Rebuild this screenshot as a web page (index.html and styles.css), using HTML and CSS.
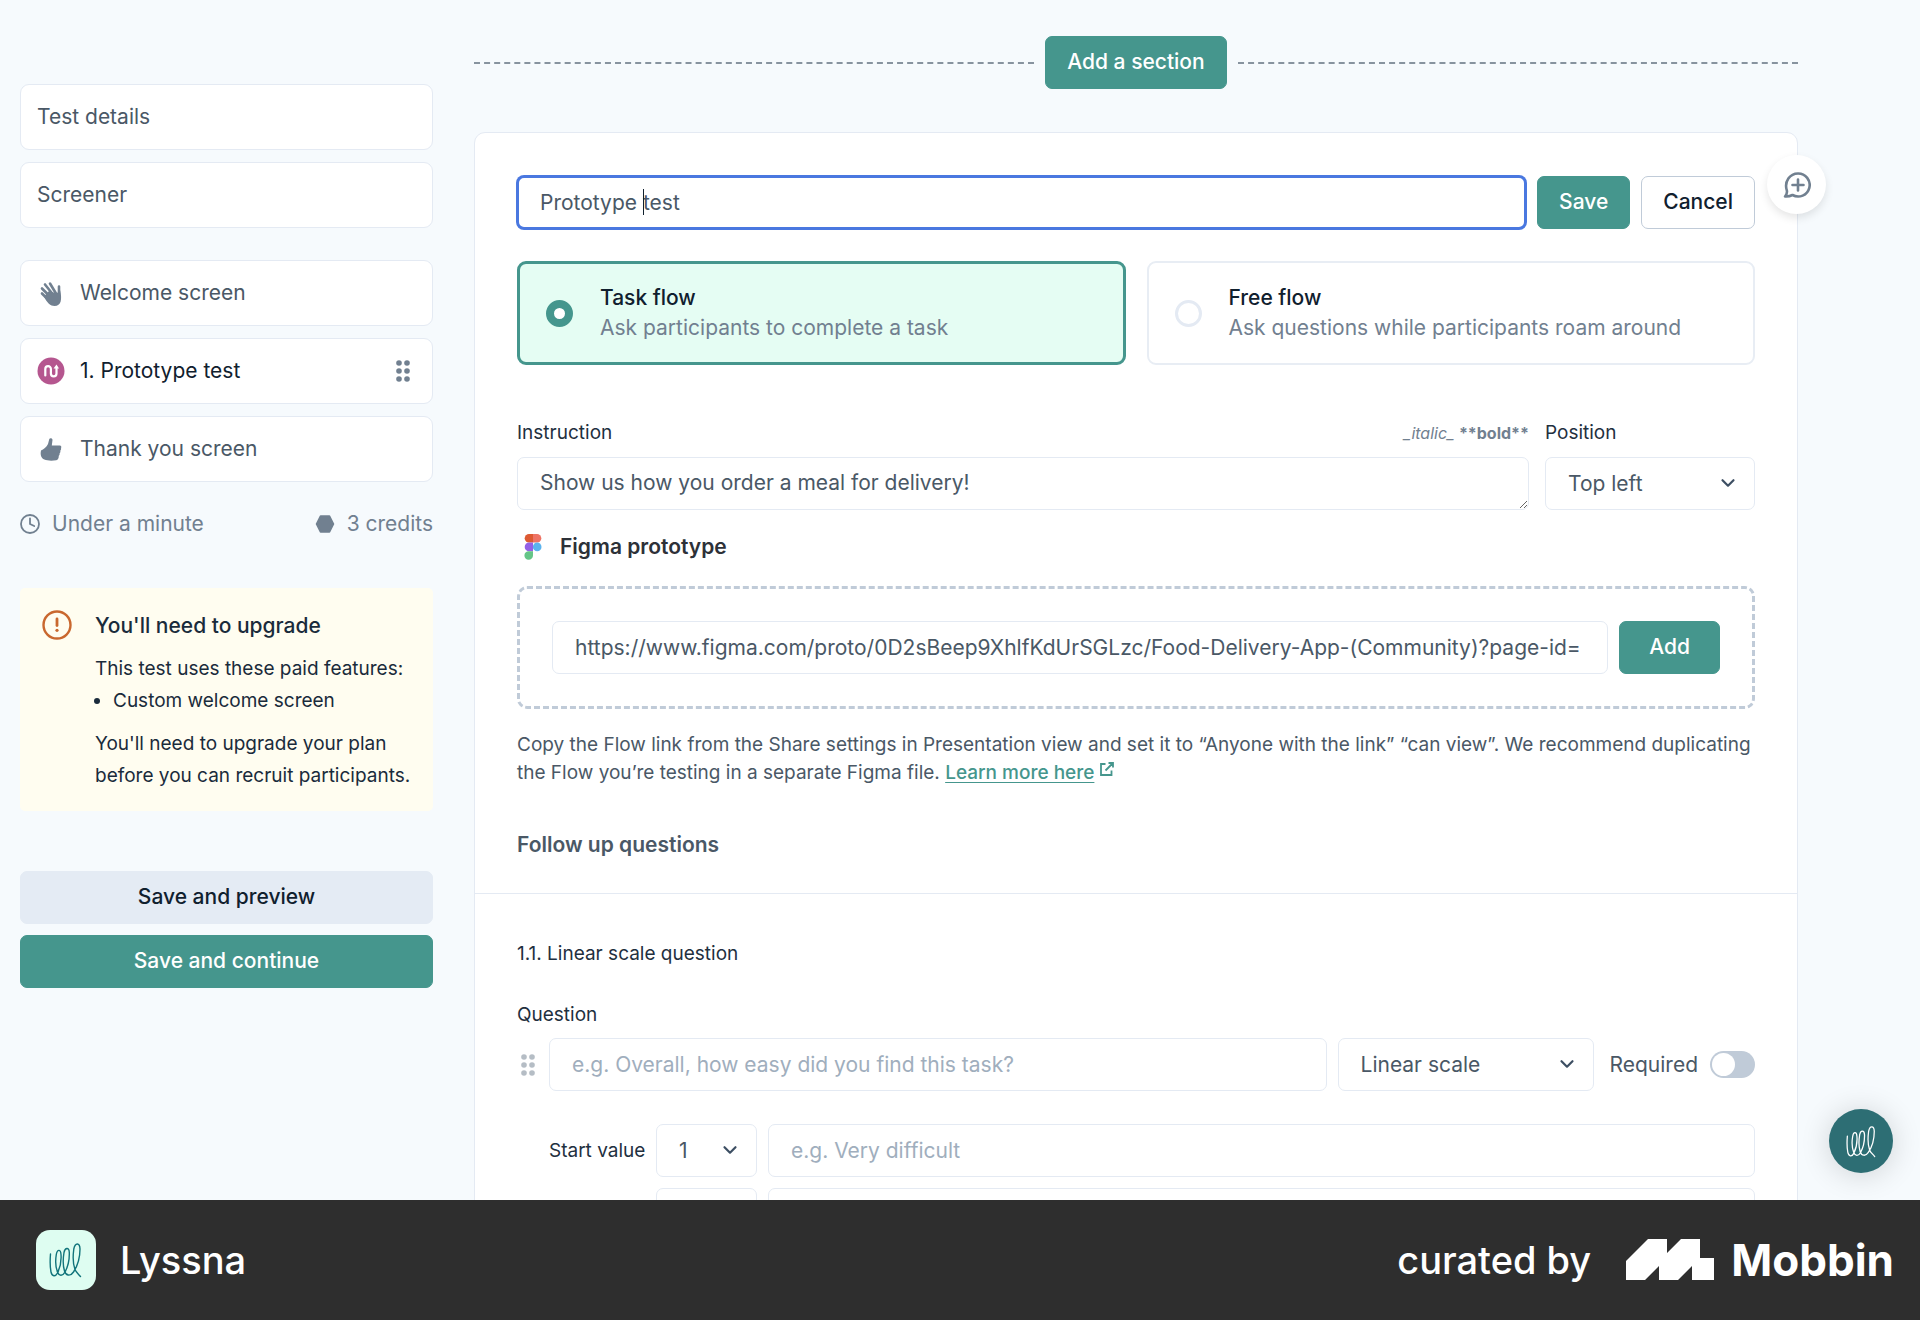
FILE: index.html
```
<!DOCTYPE html>
<html lang="en">
<head>
<meta charset="UTF-8">
<meta name="viewport" content="width=device-width, initial-scale=1">
<title>Prototype test</title>
<link rel="stylesheet" href="styles.css">
</head>
<body>
<div class="workspace">
<nav class="sidebar">
<div class="nav-group">
<a class="nav-item" href="#details">Test details</a>
<a class="nav-item" href="#screener">Screener</a>
</div>
<div class="nav-group">
<a class="nav-item" href="#welcome">
<svg class="nav-icon" viewBox="0 0 28 28" fill="none" stroke="#718090" stroke-width="2.600" stroke-linecap="round"><path d="M5 14.500l6 6M5 9.500l9 9M8 5.500l8 10M13 4.500l6 10M22 7.500v10"/><path d="M7 17.500L12 12l7.500 2.500 3.700-3c2 9 1 15.500-5.700 15.500-4 0-7.500-3-10.500-9.500z" fill="#718090" stroke="none"/></svg>
Welcome screen</a>
<a class="nav-item active" href="#prototype">
<svg class="nav-icon" viewBox="0 0 28 28"><circle cx="14" cy="14" r="13.500" fill="#b5568f"/><path d="M8.300 18.500V12a2.800 2.800 0 0 1 5.600 0v4.500a2.800 2.800 0 0 0 5.600 0v-6" fill="none" stroke="#fff" stroke-width="2.200" stroke-linecap="round"/><path d="M16.500 11.500l3-4 2.500 4z" fill="#fff"/></svg>
1. Prototype test
<svg class="drag" viewBox="0 0 16 24" fill="#718090"><circle cx="4" cy="4" r="2.800"/><circle cx="12" cy="4" r="2.800"/><circle cx="4" cy="12" r="2.800"/><circle cx="12" cy="12" r="2.800"/><circle cx="4" cy="20" r="2.800"/><circle cx="12" cy="20" r="2.800"/></svg>
</a>
<a class="nav-item" href="#thanks">
<svg class="nav-icon" viewBox="0 0 28 28" fill="#718090"><path d="M4 15.500c2.500-1 5.500-3.500 7-6.500l1.300-5c.5-1.500 3.300-1 3.200 1l-.7 5.500h8c1.500 0 2 1.500 1.200 2.500.3 1 0 2-.7 2.700.3 1 0 2-.7 2.600.2 1-.1 2-.8 2.500 0 2.500-.8 4-2.500 4.400-4 .8-9 .6-12-.6-3-1.300-4.300-4.600-3.300-9.100z"/></svg>
Thank you screen</a>
</div>
<div class="meta">
<span class="meta-item"><svg width="20" height="20" viewBox="0 0 20 20" fill="none" stroke="#718090" stroke-width="1.800"><circle cx="10" cy="10" r="9"/><path d="M10 4.500V10l4.200 2" stroke-linecap="round"/></svg>Under a minute</span>
<span class="meta-item"><svg width="20" height="20" viewBox="0 0 20 20"><path d="M5.500 2h9l4 8-4 8h-9l-4-8z" fill="#718090" stroke="#718090" stroke-width="1.600" stroke-linejoin="round"/></svg>3 credits</span>
</div>
<section class="notice">
<svg width="30" height="30" viewBox="0 0 30 30" fill="none" stroke="#c9682f" stroke-width="2.400"><circle cx="15" cy="15" r="13.500"/><path d="M15 9v6.500" stroke-width="2.800" stroke-linecap="round"/><circle cx="15" cy="20.300" r="1.600" fill="#c9682f" stroke="none"/></svg>
<div class="notice-text">
<h2>You'll need to upgrade</h2>
<p>This test uses these paid features:</p>
<ul>
<li>Custom welcome screen</li>
</ul>
<p>You'll need to upgrade your plan before you can recruit participants.</p>
</div>
</section>
<div class="side-actions">
<button class="btn btn-light" type="button">Save and preview</button>
<button class="btn" type="button">Save and continue</button>
</div>
</nav>
<main class="main">
<div class="add-section">
<span class="dash"></span>
<button class="btn" type="button">Add a section</button>
<span class="dash"></span>
</div>
<form class="card">
<button class="comment" type="button" aria-label="Add comment">
<svg width="28" height="28" viewBox="0 0 28 28" fill="none" stroke="#718090" stroke-width="2.600" stroke-linecap="round" stroke-linejoin="round"><path d="M2 25.500c1.800-2 2.300-4 1.800-6.200C1 10.500 7 2.500 15 2.500a11.500 11.500 0 1 1-5.500 21.500c-2.500 1.300-5 1.700-7.500 1.500z"/><path d="M15 8.500v11M9.500 14h11"/></svg>
</button>
<div class="card-top">
<div class="title-row">
<div class="title-field">
<input class="field focused" type="text" value="Prototype test" aria-label="Section name">
<span class="caret"></span>
</div>
<button class="btn" type="button">Save</button>
<button class="btn btn-outline" type="button">Cancel</button>
</div>
<div class="options">
<label class="option selected">
<input type="radio" name="flow" checked>
<span><strong>Task flow</strong>Ask participants to complete a task</span>
</label>
<label class="option">
<input type="radio" name="flow">
<span><strong>Free flow</strong>Ask questions while participants roam around</span>
</label>
</div>
<div class="instruction-row">
<div class="instruction">
<div class="label-row">
<label class="label" for="instruction">Instruction</label>
<span class="hint"><em>_italic_</em> <b>**bold**</b></span>
</div>
<textarea class="field" id="instruction" rows="1">Show us how you order a meal for delivery!</textarea>
</div>
<div class="position">
<label class="label" for="position">Position</label>
<div class="select">
<select class="field" id="position"><option>Top left</option></select>
<svg class="chevron" viewBox="0 0 14 10"><path d="M2 2l5 5 5-5"/></svg>
</div>
</div>
</div>
<h3 class="figma-title">
<svg width="18" height="26" viewBox="0 0 18 26"><path d="M9 0H5a4.300 4.300 0 0 0 0 8.600h4z" fill="#dd5a33"/><path d="M9 0h4a4.300 4.300 0 0 1 0 8.600H9z" fill="#ee7365"/><path d="M9 8.600H5a4.300 4.300 0 0 0 0 8.600h4z" fill="#9361e6"/><circle cx="13.200" cy="12.900" r="4.300" fill="#5bb3ee"/><path d="M5 17.200h4v4.300a4.300 4.300 0 1 1-4-4.300z" fill="#65c587"/></svg>
Figma prototype</h3>
<div class="prototype">
<input class="field" type="text" aria-label="Figma prototype link" value="https://www.figma.com/proto/0D2sBeep9XhlfKdUrSGLzc/Food-Delivery-App-(Community)?page-id=">
<button class="btn btn-add" type="button">Add</button>
</div>
<p class="help">Copy the Flow link from the Share settings in Presentation view and set it to “Anyone with the link” “can view”. We recommend duplicating the Flow you’re testing in a separate Figma file. <a href="#learn">Learn more here</a> <svg width="14" height="14" viewBox="0 0 14 14" fill="none" stroke="#45968d" stroke-width="1.800"><path d="M5.500 2H1v11h10.500V8.500M8.500 1H13v4.500M13 1L5.500 8.500"/></svg></p>
<h3 class="follow-title">Follow up questions</h3>
</div>
<div class="question">
<p class="question-title">1.1. Linear scale question</p>
<label class="label" for="question">Question</label>
<div class="question-row">
<svg class="drag" viewBox="0 0 16 24" fill="#b5bdc5"><circle cx="4" cy="4" r="2.800"/><circle cx="12" cy="4" r="2.800"/><circle cx="4" cy="12" r="2.800"/><circle cx="12" cy="12" r="2.800"/><circle cx="4" cy="20" r="2.800"/><circle cx="12" cy="20" r="2.800"/></svg>
<input class="field" id="question" type="text" placeholder="e.g. Overall, how easy did you find this task?">
<div class="select kind">
<select class="field" aria-label="Question type"><option>Linear scale</option></select>
<svg class="chevron" viewBox="0 0 14 10"><path d="M2 2l5 5 5-5"/></svg>
</div>
<label class="required">Required <input type="checkbox"></label>
</div>
<div class="scale">
<label class="label" for="start">Start value</label>
<div class="select">
<select class="field" id="start"><option>1</option></select>
<svg class="chevron" viewBox="0 0 14 10"><path d="M2 2l5 5 5-5"/></svg>
</div>
<input class="field" type="text" aria-label="Start label" placeholder="e.g. Very difficult">
<label class="label" for="end">End value</label>
<div class="select">
<select class="field" id="end"><option>5</option></select>
<svg class="chevron" viewBox="0 0 14 10"><path d="M2 2l5 5 5-5"/></svg>
</div>
<input class="field" type="text" aria-label="End label" placeholder="e.g. Very easy">
</div>
</div>
</form>
</main>
<button class="chat" type="button" aria-label="Open chat">
<svg width="31" height="35" viewBox="0 0 34 38" fill="none" stroke="#fff" stroke-width="1.400" stroke-linecap="round" stroke-linejoin="round"><path d="M1.500 13C1 19 1 26 2 31c1 4.500 4.500 5 6.500 1 2.500-5 4-12 3.500-18.500-.3-5.500-3.800-5.500-4.700 0-1 6-.8 12.500 1.200 17.500 1.500 4 5 4.500 7.500 0 3-5.500 4.500-13 4.300-19.500-.3-5.500-4.300-5-5.300 0-1 6-1.200 13 .5 18.500 1.500 5 6 5.500 9 1 4-6 6.500-15 6.500-23-.1-7-5-6.500-6.200 0C24 14 23.500 22 26 28.500c1 2.500 2.500 3.500 5.500 7"/></svg>
</button>
</div>
<footer class="footer">
<div class="app">
<span class="app-logo"><svg width="34" height="38" viewBox="0 0 34 38" fill="none" stroke="#11747b" stroke-width="1.400" stroke-linecap="round" stroke-linejoin="round"><path d="M1.500 13C1 19 1 26 2 31c1 4.500 4.500 5 6.500 1 2.500-5 4-12 3.500-18.500-.3-5.500-3.800-5.500-4.700 0-1 6-.8 12.500 1.200 17.500 1.500 4 5 4.500 7.500 0 3-5.500 4.500-13 4.300-19.500-.3-5.500-4.300-5-5.300 0-1 6-1.200 13 .5 18.500 1.500 5 6 5.500 9 1 4-6 6.500-15 6.500-23-.1-7-5-6.500-6.200 0C24 14 23.500 22 26 28.500c1 2.500 2.500 3.500 5.500 7"/></svg></span>
<span>Lyssna</span>
</div>
<div class="curated">
<span>curated by</span>
<svg width="88" height="42" viewBox="0 0 88 42" fill="#fff"><path d="M0 22L22 0h19v14L55 0h19v19h14v22H66V27L52 41H33V27L19 41H0z"/></svg>
<strong>Mobbin</strong>
</div>
</footer>
</body>
</html>
```
FILE: styles.css
```
* {
box-sizing: border-box;
}
body {
margin: 0;
height: 100vh;
display: flex;
flex-direction: column;
background-color: #f6fafd;
color: #4a5866;
font-family: Inter, "Liberation Sans", sans-serif;
font-size: 21px;
line-height: 30px;
}
h2, h3, p, ul {
margin: 0;
}
button, input, select, textarea {
font: inherit;
color: inherit;
}
.workspace {
position: relative;
flex: 1;
min-height: 0;
overflow: hidden;
display: flex;
gap: 41px;
padding: 0 122px 0 20px;
}
/* sidebar */
.sidebar {
flex: 0 0 413px;
padding-top: 84px;
}
.nav-group {
display: flex;
flex-direction: column;
gap: 12px;
margin-bottom: 32px;
}
.nav-item {
display: flex;
align-items: center;
gap: 15px;
height: 66px;
padding: 0 16px;
background-color: #fff;
border: 1px solid #e4eaf3;
border-radius: 9px;
color: #4a5866;
text-decoration: none;
}
.nav-item.active {
color: #10202e;
}
.nav-icon {
width: 28px;
height: 28px;
}
.drag {
flex: none;
width: 16px;
height: 24px;
}
.nav-item .drag {
margin-left: auto;
margin-right: 5px;
}
.meta {
display: flex;
justify-content: space-between;
margin-top: -5px;
color: #718090;
}
.meta-item {
display: flex;
align-items: center;
gap: 12px;
}
.notice {
display: flex;
gap: 23px;
margin-top: 49px;
padding: 22px 22px 19px;
background-color: #fffdf0;
border-radius: 5px;
color: #1a2b3b;
font-size: 19px;
line-height: 32px;
}
.notice svg {
flex: none;
}
.notice h2 {
margin-bottom: 11px;
font-size: 21px;
font-weight: 500;
}
.notice ul {
margin-bottom: 11px;
padding-left: 18px;
}
.side-actions {
display: grid;
gap: 11px;
margin-top: 60px;
}
/* buttons and fields */
.btn {
height: 53px;
padding: 0 20px 1px;
background-color: #45968d;
border: 1px solid #45968d;
border-radius: 7px;
color: #fff;
font-weight: 500;
white-space: nowrap;
}
.btn-light {
background-color: #e4ebf4;
border-color: #e4ebf4;
color: #10202e;
}
.btn-outline {
background-color: #fff;
border-color: #c0cbd8;
color: #10202e;
}
.add-section .btn {
padding: 0 21px 1px;
}
.field {
display: block;
width: 100%;
min-width: 0;
height: 53px;
padding: 0 22px;
background-color: #fff;
border: 1px solid #e4eaf3;
border-radius: 7px;
}
.field::placeholder {
color: #a0aebd;
opacity: 1;
}
.field.focused {
border: 2px solid #4a78e0;
padding: 0 21px;
box-shadow: 0 0 0 1px #4a78e0;
}
textarea.field {
padding-top: 10px;
line-height: 30px;
overflow: hidden;
resize: vertical;
}
.select {
display: grid;
align-items: center;
}
.select > * {
grid-area: 1 / 1;
}
select.field {
appearance: none;
}
.chevron {
justify-self: end;
width: 16px;
height: 11px;
margin-right: 19px;
fill: none;
stroke: #3d4f63;
stroke-width: 2;
stroke-linecap: round;
stroke-linejoin: round;
pointer-events: none;
}
.label {
display: block;
color: #1f3040;
font-size: 19px;
line-height: 28px;
white-space: nowrap;
}
/* main column */
.main {
flex: 1;
min-width: 0;
padding-top: 36px;
}
.add-section {
display: flex;
align-items: center;
gap: 11px;
margin-bottom: 43px;
}
.dash {
flex: 1;
border-top: 2px dashed #87939f;
}
.card {
position: relative;
background-color: #fff;
border: 1px solid #e4eaf3;
border-radius: 11px;
}
.comment {
position: absolute;
top: 22px;
right: -29px;
display: grid;
place-items: center;
width: 59px;
height: 59px;
padding: 0;
background-color: #fff;
border: 0;
border-radius: 50%;
box-shadow: 0 4px 9px rgba(0, 0, 0, 0.1);
}
.card-top {
padding: 43px 42px 33px;
border-bottom: 1px solid #e4eaf3;
}
.title-row {
display: flex;
gap: 11px;
margin-bottom: 32px;
}
.title-row .btn {
padding: 0 21px 1px;
}
.title-field {
position: relative;
flex: 1;
}
.caret {
position: absolute;
top: 13px;
left: 126px;
width: 1px;
height: 26px;
background-color: #10202e;
}
.options {
display: grid;
grid-template-columns: 1fr 1fr;
gap: 21px;
margin-bottom: 54px;
}
.option {
display: flex;
align-items: center;
gap: 27px;
height: 104px;
padding: 0 26px;
border: 2px solid #e8edf4;
border-radius: 9px;
color: #718090;
}
.option.selected {
background-color: #e5fdf3;
border: 3px solid #45968d;
}
.option strong {
display: block;
color: #10202e;
font-weight: 500;
}
.option input {
appearance: none;
flex: none;
width: 27px;
height: 27px;
margin: 0;
border: 3px solid #e4eaf3;
border-radius: 50%;
background-color: #fff;
}
.option input:checked {
border: 8px solid #45968d;
}
.instruction-row {
display: flex;
gap: 16px;
margin-bottom: 22px;
}
.instruction {
flex: 1;
}
.position {
width: 210px;
}
.label-row {
display: flex;
justify-content: space-between;
}
.instruction-row .field {
margin-top: 10px;
}
.instruction-row .chevron {
margin-top: 10px;
}
.hint {
color: #718090;
font-size: 16px;
line-height: 28px;
}
.figma-title {
display: flex;
align-items: center;
gap: 18px;
margin-bottom: 24px;
padding-left: 7px;
color: #2d3138;
font-size: 21px;
font-weight: 600;
}
.prototype {
display: flex;
gap: 11px;
padding: 32px;
border: 3px dashed #c0cbd8;
border-radius: 10px;
}
.btn-add {
padding: 0 29px 1px;
}
.help {
margin-top: 22px;
font-size: 19px;
line-height: 28px;
}
.help a {
color: #45968d;
font-weight: 500;
text-underline-offset: 3px;
}
.help svg {
vertical-align: 3px;
}
.follow-title {
margin-top: 43px;
font-size: 21px;
font-weight: 600;
}
.question {
padding: 46px 42px;
}
.question-title {
margin-bottom: 33px;
color: #1f3040;
font-size: 19px;
line-height: 28px;
}
.question-row {
display: flex;
align-items: center;
gap: 11px;
margin: 9px 0 33px;
padding-left: 3px;
}
.question-row .drag {
margin-right: 2px;
}
.question-row .field {
flex: 1;
}
.kind {
flex: 0 0 256px;
}
.required {
display: flex;
align-items: center;
gap: 12px;
margin-left: 5px;
}
.required input {
appearance: none;
width: 45px;
height: 27px;
margin: 0;
padding: 2px;
background-color: #c0cbd8;
border-radius: 14px;
}
.required input::before {
content: "";
display: block;
width: 23px;
height: 23px;
background-color: #fff;
border-radius: 50%;
}
.scale {
display: grid;
grid-template-columns: 96px 101px 1fr;
align-items: center;
gap: 11px;
padding-left: 32px;
}
.chat {
position: absolute;
right: 27px;
bottom: 27px;
display: grid;
place-items: center;
width: 64px;
height: 64px;
padding: 0;
background-color: #2d6e74;
border: 0;
border-radius: 50%;
box-shadow: 0 2px 30px rgba(0, 0, 0, 0.16);
}
/* bottom bar */
.footer {
flex: 0 0 120px;
display: flex;
align-items: center;
justify-content: space-between;
padding: 0 26px 0 36px;
background-color: #2e2e2e;
color: #fff;
font-size: 38px;
font-weight: 500;
line-height: 48px;
}
.app, .curated {
display: flex;
align-items: center;
}
.app {
gap: 24px;
}
.app-logo {
display: grid;
place-items: center;
width: 60px;
height: 60px;
background-color: #defdf1;
border-radius: 14px;
}
.curated svg {
margin: 0 17px 0 35px;
}
.curated strong {
font-size: 44px;
font-weight: 700;
}
```
